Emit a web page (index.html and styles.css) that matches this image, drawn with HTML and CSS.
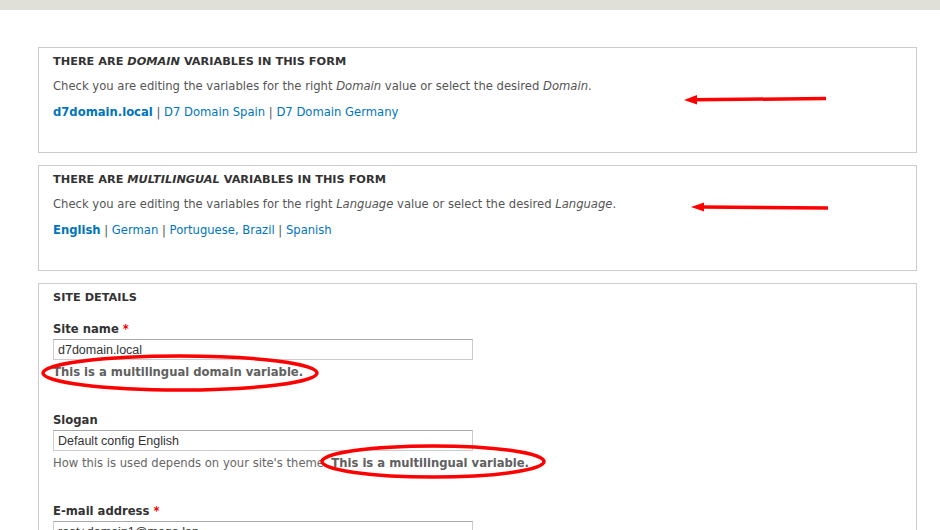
FILE: index.html
```html
<!DOCTYPE html>
<html lang="en">
<head>
    <meta charset="UTF-8">
    <title>Site information</title>
    <link rel="stylesheet" href="styles.css">
</head>
<body>
    <div class="top-bar"></div>

    <div class="page">
        <div class="fieldset">
            <h2 class="legend">There are <em>Domain</em> variables in this form</h2>
            <p class="desc">Check you are editing the variables for the right <em>Domain</em> value or select the desired <em>Domain</em>.</p>
            <p class="links"><a href="#" class="active">d7domain.local</a> | <a href="#">D7 Domain Spain</a> | <a href="#">D7 Domain Germany</a></p>
        </div>

        <div class="fieldset">
            <h2 class="legend">There are <em>Multilingual</em> variables in this form</h2>
            <p class="desc">Check you are editing the variables for the right <em>Language</em> value or select the desired <em>Language</em>.</p>
            <p class="links"><a href="#" class="active">English</a> | <a href="#">German</a> | <a href="#">Portuguese, Brazil</a> | <a href="#">Spanish</a></p>
        </div>

        <div class="fieldset">
            <h2 class="legend">Site details</h2>

            <div class="form-item first">
                <label for="site-name">Site name <span class="required">*</span></label>
                <input type="text" id="site-name" value="d7domain.local">
                <div class="description"><strong>This is a multilingual domain variable.</strong></div>
            </div>

            <div class="form-item">
                <label for="slogan">Slogan</label>
                <input type="text" id="slogan" value="Default config English">
                <div class="description">How this is used depends on your site's theme. <strong>This is a multilingual variable.</strong></div>
            </div>

            <div class="form-item">
                <label for="mail">E-mail address <span class="required">*</span></label>
                <input type="text" id="mail" value="root+domain1@mego.lan">
            </div>
        </div>
    </div>

    <!-- red annotations drawn over the screenshot -->
    <svg class="marks" width="940" height="530" viewBox="0 0 940 530">
        <g stroke="#f00" fill="none" stroke-width="3.5">
            <line x1="826" y1="98.5" x2="694" y2="99.8"/>
            <line x1="828" y1="208" x2="701" y2="207"/>
            <ellipse cx="180" cy="373" rx="137" ry="17"/>
            <ellipse cx="433" cy="461.5" rx="111" ry="15.5"/>
        </g>
        <g fill="#f00">
            <polygon points="684,100 697,95 697,104.5"/>
            <polygon points="691,207 704,202.5 704,211.5"/>
        </g>
    </svg>
</body>
</html>
```

FILE: styles.css
```css
body {
    margin: 0;
    background-color: #ffffff;
    font-family: "DejaVu Sans", Verdana, sans-serif;
    font-size: 11.6px;
    color: #333333;
}

.top-bar {
    height: 10px;
    background-color: #e0dfd8;
}

.page {
    padding: 37px 23px 0 38px;
}

.fieldset {
    border: 1px solid #cccccc;
    padding: 6px 14px 32px 14px;
    margin-bottom: 12px;
}

.legend {
    margin: 0;
    font-size: 11.3px;
    line-height: 16px;
    font-weight: bold;
    text-transform: uppercase;
    color: #333333;
}

.desc {
    margin: 8px 0 0 0;
    line-height: 16px;
    color: #555555;
}

.links {
    margin: 10px 0 0 0;
    line-height: 16px;
    color: #555555;
}

.links a {
    color: #0074bd;
    text-decoration: none;
}

.links a.active {
    font-weight: bold;
}

.form-item {
    margin-top: 32px;
}

.form-item.first {
    margin-top: 15px;
}

label {
    display: block;
    font-weight: bold;
    font-size: 11.6px;
    line-height: 16px;
    color: #333333;
    margin-bottom: 2px;
}

.required {
    color: #ee0000;
}

input {
    display: block;
    box-sizing: border-box;
    width: 420px;
    height: 21px;
    padding: 0 4px;
    border: 1px solid #cccccc;
    border-top-color: #a8a8a8;
    font-family: "Liberation Sans", Arial, sans-serif;
    font-size: 12.5px;
    color: #333333;
}

.description {
    margin-top: 4px;
    line-height: 16px;
    color: #666666;
}

.description strong {
    color: #606060;
}

.marks {
    position: absolute;
    top: 0;
    left: 0;
    pointer-events: none;
}
```
